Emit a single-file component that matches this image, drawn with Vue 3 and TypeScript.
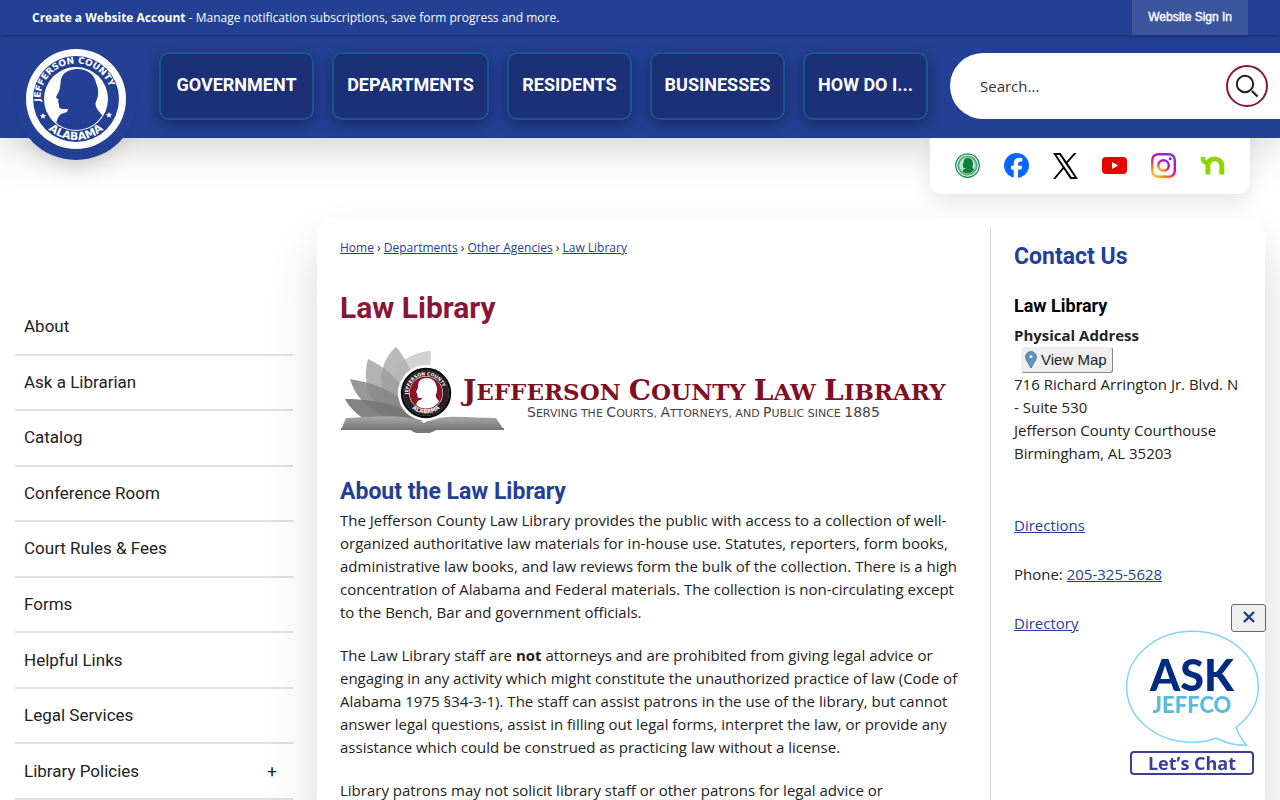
<script setup lang="ts">
import { ref } from 'vue'

const menus: string[] = ['Government', 'Departments', 'Residents', 'Businesses', 'How Do I...']

interface SideLink {
  label: string
  expandable?: boolean
}

const sideLinks: SideLink[] = [
  { label: 'About' },
  { label: 'Ask a Librarian' },
  { label: 'Catalog' },
  { label: 'Conference Room' },
  { label: 'Court Rules & Fees' },
  { label: 'Forms' },
  { label: 'Helpful Links' },
  { label: 'Legal Services' },
  { label: 'Library Policies', expandable: true },
]

const crumbs: string[] = ['Home', 'Departments', 'Other Agencies', 'Law Library']

const query = ref('')
const chatOpen = ref(true)
</script>

<template>
  <div class="page">
    <svg class="defs" aria-hidden="true">
      <defs>
        <path id="arc-top" d="M14.5 50a35.5 35.5 0 1 1 71 0a35.5 35.5 0 0 1 -71 0" transform="rotate(-12 50 50)" />
        <path id="arc-bottom" d="M9 50a41 41 0 0 0 82 0" />
        <clipPath id="disc"><circle cx="50" cy="50" r="31" /></clipPath>
        <path
          id="bust"
          clip-path="url(#disc)"
          d="M52 20C46 20 40 22 37 26C34 30 35 34 34 38C34 42 31 45 30 48.500L32.500 50.500L32 53L33 55L33 58Q34 60 38 60L42 60L41 63L35 65C31 68 31 73 28 80L50 84L78 78V68C72 62 69 58 69.500 54C73 47 73 40 70 34C69 26 61 20 52 20Z"
        />
        <path id="star" d="M0 -3.200L0.900 -1L3.200 -1L1.400 0.500L2 2.800L0 1.500L-2 2.800L-1.400 0.500L-3.200 -1L-0.900 -1Z" />
      </defs>
    </svg>

    <div class="topbar">
      <p class="account"><a href="#account">Create a Website Account</a> - Manage notification subscriptions, save form progress and more.</p>
      <a class="signin" href="#signin">Website Sign In</a>
    </div>

    <header class="header">
      <a class="logo" href="#home" aria-label="Jefferson County Alabama">
        <svg viewBox="0 0 100 100" width="100" height="100">
          <circle cx="50" cy="50" r="50" fill="#fff" />
          <circle cx="50" cy="50" r="43" fill="#234094" />
          <circle cx="50" cy="50" r="32" fill="#fff" />
          <use href="#bust" fill="#234094" />
          <text class="ring-text" fill="#fff" font-size="9"><textPath href="#arc-top" startOffset="5">JEFFERSON COUNTY</textPath></text>
          <text class="ring-text" fill="#fff" font-size="11" text-anchor="middle"><textPath href="#arc-bottom" startOffset="50%">ALABAMA</textPath></text>
          <use href="#star" x="17" y="67" fill="#fff" />
          <use href="#star" x="83" y="66" fill="#fff" />
        </svg>
      </a>

      <nav class="nav" aria-label="Main">
        <a v-for="m in menus" :key="m" class="nav-item" :href="'#' + m">{{ m }}</a>
      </nav>

      <form class="search" role="search" @submit.prevent>
        <input v-model="query" type="text" placeholder="Search..." aria-label="Search" />
        <button type="submit" aria-label="Search">
          <svg viewBox="0 0 42 42" width="42" height="42" fill="none">
            <circle cx="21" cy="21" r="20" stroke="#8a1538" stroke-width="2" />
            <circle cx="19" cy="19" r="8.200" stroke="#222" stroke-width="2" />
            <path d="M26 26L31.500 31.500" stroke="#222" stroke-width="2.200" />
          </svg>
        </button>
      </form>
    </header>

    <div class="social-row">
      <div class="social">
        <a href="#county" aria-label="Jefferson County">
          <svg viewBox="0 0 100 100" width="25" height="25">
            <circle cx="50" cy="50" r="47" fill="#fff" stroke="#128a4a" stroke-width="5" />
            <circle cx="50" cy="50" r="37" fill="#a5d5b8" stroke="#5bb081" stroke-width="8" />
            <circle cx="50" cy="50" r="31" fill="#c4e3d0" />
            <use href="#bust" fill="#0a8040" />
          </svg>
        </a>
        <a href="#facebook" aria-label="Facebook">
          <svg viewBox="0 0 25 25" width="25" height="25">
            <circle cx="12.500" cy="12.500" r="12.500" fill="#0866ff" />
            <path d="M9.700 25V16.500H7V12.700H9.700V10.900C9.700 6.700 11.600 4.700 15.700 4.700C16.500 4.700 17.800 4.900 18.300 5V8.500C18 8.400 17.500 8.400 16.900 8.400C14.900 8.400 14.100 9.200 14.100 11.100V12.700H18.100L17.400 16.500H14.100V25Z" fill="#fff" />
          </svg>
        </a>
        <a href="#x" aria-label="X">
          <svg viewBox="0 0 25 26" width="25" height="26">
            <path fill-rule="evenodd" d="M0 0H7.600L13.500 8.400L21 0H23.500L14.600 10.100L25 26H17.300L10.700 16.100L2.300 26H0L9.600 14.500ZM3.500 2L18.500 24H21.500L6.500 2Z" fill="#000" />
          </svg>
        </a>
        <a href="#youtube" aria-label="YouTube">
          <svg viewBox="0 0 25 25" width="25" height="25">
            <rect y="4" width="25" height="17" rx="4" fill="#ec0000" />
            <path d="M10 9L16.300 12.500L10 16Z" fill="#fff" />
          </svg>
        </a>
        <a href="#instagram" aria-label="Instagram">
          <svg viewBox="0 0 25 25" width="25" height="25" fill="none">
            <defs>
              <linearGradient id="ig" x1="0" y1="1" x2="0.700" y2="0">
                <stop offset="0" stop-color="#ffd520" />
                <stop offset="0.250" stop-color="#ff8a10" />
                <stop offset="0.500" stop-color="#f51a6b" />
                <stop offset="0.750" stop-color="#c90fb8" />
                <stop offset="1" stop-color="#7a2cf5" />
              </linearGradient>
            </defs>
            <rect x="1.200" y="1.200" width="22.600" height="22.600" rx="6" stroke="url(#ig)" stroke-width="2.400" />
            <circle cx="12.500" cy="12.500" r="5.300" stroke="url(#ig)" stroke-width="2.400" />
            <circle cx="19.200" cy="5.800" r="1.500" fill="#b510d0" />
          </svg>
        </a>
        <a href="#nextdoor" aria-label="Nextdoor">
          <svg viewBox="0 0 25 25" width="25" height="25">
            <path d="M0.500 4H5.200C5.300 6 5.600 6.900 6.600 7.500C8.200 5 11 3.500 14.500 3.500C20 3.500 24.300 7 24.300 12.400V21.500H19.300V12.700C19.300 10.200 17.400 8.300 14.800 8.300C12.200 8.300 10.300 10.200 10.300 12.700V21.500H5.400V11.800C2.300 11 0.600 8.200 0.500 4Z" fill="#8ed500" />
          </svg>
        </a>
      </div>
    </div>

    <div class="body">
      <nav class="side" aria-label="Law Library pages">
        <ul>
          <li v-for="l in sideLinks" :key="l.label">
            <a :href="'#' + l.label">{{ l.label }}</a>
            <button v-if="l.expandable" type="button" :aria-label="'Expand ' + l.label">+</button>
          </li>
        </ul>
      </nav>

      <div class="card">
        <main class="content">
          <div class="crumbs">
            <template v-for="(c, i) in crumbs" :key="c">
              <span v-if="i > 0"> › </span><a :href="'#' + c">{{ c }}</a>
            </template>
          </div>
          <h1>Law Library</h1>
          <svg class="banner" viewBox="0 0 616 88" role="img" aria-label="Jefferson County Law Library">
            <defs>
              <linearGradient id="book" x1="0" y1="0" x2="0" y2="1">
                <stop offset="0" stop-color="#a8a8a8" />
                <stop offset="1" stop-color="#6c6c6c" />
              </linearGradient>
            </defs>
            <path d="M91 4C76 4 58 14 54 26L48 64L75 68C86 50 91 26 91 4Z" fill="#d2d2d2" />
            <path d="M56 0C46 8 42 20 41 32L48 72L72 66C80 50 74 20 56 0Z" fill="#b2b2b2" fill-opacity="0.900" />
            <path d="M28 12C24 26 25 44 36 58L70 74C74 52 58 26 28 12Z" fill="#999" fill-opacity="0.750" />
            <path d="M10 32C14 46 24 60 42 68L80 74C66 50 44 38 10 32Z" fill="#868686" fill-opacity="0.850" />
            <path d="M5 52C10 62 20 70 28 74L84 74C64 58 34 52 5 52Z" fill="#757575" fill-opacity="0.900" />
            <path d="M1 83L6 71C34 70 66 66 84 76C100 66 130 71 156 71L164 83H96Q92 85 89 86H77Q73 85 71 83Z" fill="url(#book)" />
            <path d="M1 81H72Q74 83 77 84H88Q91 83 95 81H164V83H96Q92 85 89 86H77Q73 85 71 83H1Z" fill="#777" />
            <circle cx="86" cy="46" r="28" fill="#fff" />
            <g transform="translate(61 21) scale(0.500)">
              <circle cx="50" cy="50" r="48" fill="#fff" stroke="#0c0c0c" stroke-width="5" />
              <circle cx="50" cy="50" r="40" fill="none" stroke="#2a2226" stroke-width="12" />
              <circle cx="50" cy="50" r="33" fill="#8d1429" />
              <use href="#bust" fill="#fff" />
              <text class="ring-text" fill="#fff" font-size="9"><textPath href="#arc-top" startOffset="5">JEFFERSON COUNTY</textPath></text>
              <text class="ring-text" fill="#fff" font-size="11" text-anchor="middle"><textPath href="#arc-bottom" startOffset="50%">ALABAMA</textPath></text>
            </g>
            <text class="banner-title" x="123" y="53">
              <tspan class="cap">J</tspan>EFFERSON <tspan class="cap">C</tspan>OUNTY <tspan class="cap">L</tspan>AW <tspan class="cap">L</tspan>IBRARY
            </text>
            <text class="banner-sub" x="187" y="70">
              <tspan class="cap">S</tspan>ERVING THE <tspan class="cap">C</tspan>OURTS, <tspan class="cap">A</tspan>TTORNEYS, AND <tspan class="cap">P</tspan>UBLIC SINCE <tspan class="cap">1885</tspan>
            </text>
          </svg>
          <h2>About the Law Library</h2>
          <p>The Jefferson County Law Library provides the public with access to a collection of well-organized authoritative law materials for in-house use. Statutes, reporters, form books, administrative law books, and law reviews form the bulk of the collection. There is a high concentration of Alabama and Federal materials. The collection is non-circulating except to the Bench, Bar and government officials.</p>
          <p>The Law Library staff are <strong>not</strong> attorneys and are prohibited from giving legal advice or engaging in any activity which might constitute the unauthorized practice of law (Code of Alabama 1975 §34-3-1). The staff can assist patrons in the use of the library, but cannot answer legal questions, assist in filling out legal forms, interpret the law, or provide any assistance which could be construed as practicing law without a license.</p>
          <p>Library patrons may not solicit library staff or other patrons for legal advice or</p>
        </main>

        <aside class="contact">
          <h2>Contact Us</h2>
          <h3>Law Library</h3>
          <strong>Physical Address</strong>
          <button class="map" type="button">
            <svg viewBox="0 0 12 18" width="12" height="18">
              <path d="M6 0.700C2.800 0.700 0.700 3 0.700 6C0.700 9.500 4 12 6 17C8 12 11.300 9.500 11.300 6C11.300 3 9.200 0.700 6 0.700Z" fill="#5b96cf" stroke="#47718f" />
              <circle cx="6" cy="5.800" r="2.300" fill="#eee" stroke="#47718f" />
            </svg>
            View Map
          </button>
          <address>716 Richard Arrington Jr. Blvd. N - Suite 530<br />Jefferson County Courthouse<br />Birmingham, AL 35203</address>
          <p class="first"><a href="#directions">Directions</a></p>
          <p>Phone: <a href="tel:2053255628">205-325-5628</a></p>
          <p><a href="#directory">Directory</a></p>
        </aside>
      </div>
    </div>

    <div v-if="chatOpen" class="chat">
      <button class="close" type="button" aria-label="Close chat" @click="chatOpen = false">
        <svg viewBox="0 0 12 12" width="12" height="12"><path d="M1 1L11 11M11 1L1 11" stroke="#233c94" stroke-width="2.400" /></svg>
      </button>
      <svg class="bubble" viewBox="0 0 136 118" width="136" height="118" role="img" aria-label="Ask Jeffco">
        <path d="M112 97.300C126 87 134.300 73 134.300 57C134.300 26 105 1.300 68.500 1.300C32 1.300 2.700 26 2.700 57C2.700 88 32 112.300 68.500 112.300C77 112.300 85 111 92 108C101 113 111 115.500 122.700 115.300C117 109 114 103 112 97.300Z" fill="#fff" stroke="#82d5f5" stroke-width="1.500" />
        <text class="ask" x="68" y="61">ASK</text>
        <text class="jeffco" x="68" y="83">JEFFCO</text>
      </svg>
      <button class="lets-chat" type="button">Let’s Chat</button>
    </div>
  </div>
</template>

<style>
body {
  margin: 0;
  background: #fff;
}
</style>

<style scoped>
.page {
  color: #222;
  font: 15px/23px "Open Sans", sans-serif;
}
.page * {
  box-sizing: border-box;
}
.page p,
.page ul,
.page h1,
.page h2,
.page h3 {
  margin: 0;
  padding: 0;
}
.page a {
  color: #234094;
}
.defs {
  position: absolute;
  width: 0;
  height: 0;
}
.ring-text {
  font-family: "DejaVu Sans", sans-serif;
  font-weight: 700;
}

/* Account bar */
.topbar {
  position: relative;
  z-index: 3;
  display: flex;
  justify-content: space-between;
  padding: 0 32px;
  background: #234094;
  box-shadow: 0 1px 3px rgba(0, 0, 0, 0.35);
  color: #fff;
  font-size: 12px;
  line-height: 35px;
}
.page .account a {
  color: #fff;
  font-weight: 700;
  text-decoration: none;
}
.page .signin {
  padding: 0 16px;
  background: #3c559f;
  color: #fff;
  font-family: "Liberation Sans", sans-serif;
  text-decoration: none;
  -webkit-text-stroke: 0.4px #fff;
}

/* Header */
.header {
  position: relative;
  z-index: 2;
  display: flex;
  align-items: center;
  height: 103px;
  padding: 0 0 1px 15px;
  background: #234094;
  box-shadow: 0 0 50px rgba(0, 0, 0, 0.25);
}
.logo {
  align-self: flex-start;
  flex: none;
  height: 122px;
  width: 122px;
  margin-top: 3px;
  padding: 11px;
  border-radius: 50%;
  background: #234094;
  box-shadow: 0 20px 25px -15px rgba(0, 0, 0, 0.2);
}
.logo svg {
  display: block;
}
.nav {
  display: grid;
  grid-template-columns: 155px 157px 125px 135px 125px;
  gap: 18px;
  margin: 0 22px;
}
.page .nav-item {
  height: 68px;
  border: 2px solid #17568f;
  border-radius: 10px;
  background: #1b3077;
  box-shadow: 0 4px 14px rgba(0, 0, 0, 0.35);
  color: #fff;
  font: 700 18px/62px Roboto, sans-serif;
  text-align: center;
  text-decoration: none;
  text-transform: uppercase;
  white-space: nowrap;
}
.search {
  display: flex;
  flex: 1;
  align-items: center;
  min-width: 0;
  height: 66px;
  padding: 0 12px 0 30px;
  border-radius: 33px 0 0 33px;
  background: #fff;
}
.search input {
  flex: 1;
  min-width: 0;
  padding: 0;
  border: 0;
  outline: 0;
  background: none;
  color: #333;
  font: 15px/23px "Open Sans", sans-serif;
}
.search input::placeholder {
  color: #333;
  opacity: 1;
}
.search button {
  width: 42px;
  height: 42px;
  padding: 0;
  border: 0;
  background: none;
}
.search svg {
  display: block;
}

/* Social links */
.social-row {
  position: relative;
  z-index: 2;
  display: flex;
  justify-content: flex-end;
  padding-right: 30px;
}
.social {
  display: flex;
  gap: 24px;
  align-items: center;
  height: 56px;
  padding: 0 25px 1px;
  border-radius: 0 0 12px 12px;
  background: #fff;
  box-shadow: 0 8px 20px rgba(0, 0, 0, 0.1);
  clip-path: inset(0 -40px -40px -40px);
}
.social a,
.social svg {
  display: block;
}

/* Side menu and card */
.body {
  position: relative;
  z-index: 1;
  display: flex;
  align-items: stretch;
  gap: 24px;
  padding: 23px 15px 0;
}
.side {
  flex: 0 0 278px;
  padding-top: 83px;
}
.side ul {
  display: grid;
  grid-auto-rows: 1fr;
  min-height: 500px;
  list-style: none;
}
.side li {
  display: flex;
  align-items: center;
  justify-content: space-between;
  padding: 0 16px 0 9px;
  border-bottom: 2px solid #e1e1e1;
}
.page .side a {
  color: #222;
  font: 17px/23px Roboto, sans-serif;
  text-decoration: none;
}
.side button {
  padding: 0;
  border: 0;
  background: none;
  color: #222;
  font: 17px/23px Roboto, sans-serif;
}
.card {
  display: flex;
  flex: 1;
  min-width: 0;
  padding: 11px 22px 0;
  border-radius: 20px;
  background: #fff;
  box-shadow: 0 30px 50px rgba(0, 0, 0, 0.16);
}
.content {
  flex: 1;
  min-width: 0;
  padding: 8px 22px 0 1px;
}
.crumbs {
  font-size: 12px;
}
.content h1 {
  margin-top: 31px;
  color: #8a1538;
  font: 700 30px/36px Roboto, sans-serif;
}
.banner {
  display: block;
  width: 100%;
  max-width: 616px;
  margin-top: 21px;
}
.banner-title {
  fill: #7f1024;
  font: 700 23px "DejaVu Serif", serif;
}
.banner-title .cap {
  font-size: 28px;
}
.banner-sub {
  fill: #444;
  font: 11px "DejaVu Sans", sans-serif;
}
.banner-sub .cap {
  font-size: 14px;
}
.content h2,
.contact h2 {
  color: #234094;
  font: 700 23px/28px Roboto, sans-serif;
}
.content h2 {
  margin-top: 43px;
}
.content p {
  margin-bottom: 20px;
}
.content h2 + p {
  margin-top: 3px;
}
.contact {
  flex: 0 0 253px;
  padding: 15px 0 0 23px;
  border-left: 1px solid #d5d5d5;
}
.contact h3 {
  margin: 24px 0 7px;
  color: #000;
  font: 700 18px/22px Roboto, sans-serif;
}
.contact strong {
  display: block;
}
.map {
  display: flex;
  gap: 4px;
  align-items: center;
  height: 26px;
  margin-left: 7px;
  padding: 0 5px 0 3px;
  border: 1px solid #eee;
  border-right-color: #888;
  border-bottom-color: #888;
  border-radius: 3px;
  background: #eee;
  color: #222;
  font: 15px/22px "Liberation Sans", sans-serif;
}
.contact address {
  font-style: normal;
}
.contact p {
  margin-bottom: 26px;
}
.contact .first {
  margin-top: 49px;
}

/* Chat widget */
.chat {
  position: fixed;
  right: 14px;
  bottom: 25px;
  z-index: 5;
  display: flex;
  flex-direction: column;
  align-items: flex-end;
}
.close {
  display: flex;
  align-items: center;
  justify-content: center;
  width: 35px;
  height: 28px;
  padding: 0 0 3px;
  border: 1px solid #666;
  border-radius: 3px;
  background: #efefef;
}
.bubble {
  display: block;
  align-self: flex-start;
  margin: -2px 6px 3px 0;
}
.bubble text {
  font-family: Lato, sans-serif;
  text-anchor: middle;
}
.ask {
  fill: #002b80;
  font-size: 43px;
  font-weight: 900;
}
.jeffco {
  fill: #5bbbdc;
  font-size: 22px;
  font-weight: 900;
}
.lets-chat {
  width: 124px;
  height: 24px;
  margin-right: 12px;
  padding: 0;
  border: 2px solid #3a3f9a;
  border-radius: 4px;
  background: #fff;
  color: #3a3f9a;
  font: 700 18px/18px "Open Sans", sans-serif;
}
</style>
